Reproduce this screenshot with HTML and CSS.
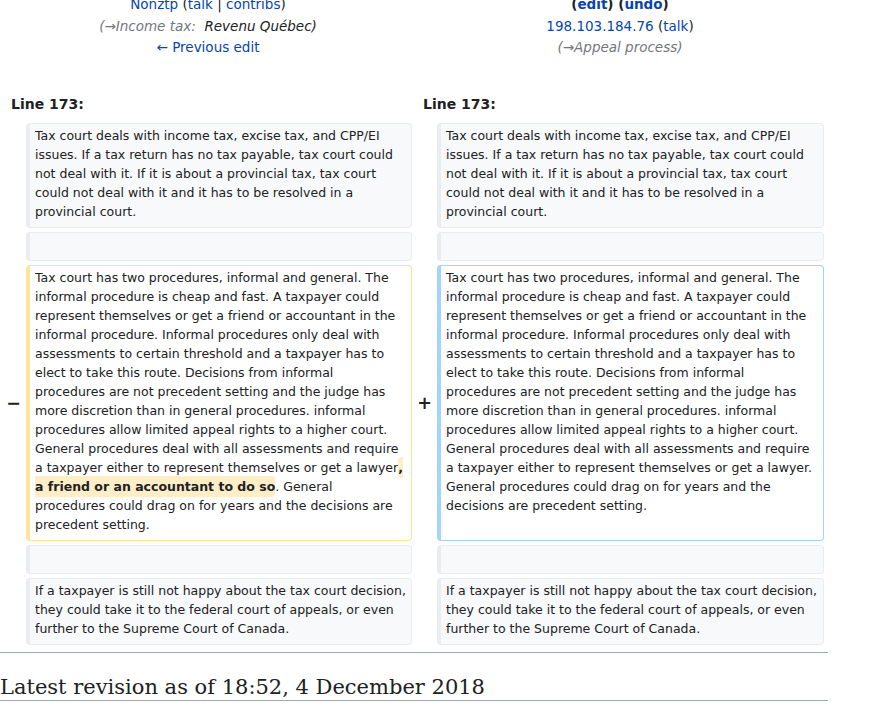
FILE: index.html
```html
<!DOCTYPE html>
<html>
<head>
<meta charset="utf-8">
<link rel="stylesheet" href="styles.css">
</head>
<body>
<div class="page">
<table class="diff">
<colgroup><col class="c-marker-l"><col class="c-content-l"><col class="c-marker-r"><col class="c-content-r"></colgroup>
<tr class="diff-title">
<td colspan="2" class="diff-otitle">
<div><a>Nonztp</a> <span class="paren">(<a>talk</a> | <a>contribs</a>)</span></div>
<div class="comment"><span class="gray">(<a class="gray">→Income tax:</a>&nbsp; </span>Revenu Québec<span class="dark">)</span></div>
<div><a>← Previous edit</a></div>
</td>
<td colspan="2" class="diff-ntitle">
<div class="bold"><span class="paren">(</span><a>edit</a><span class="paren">)</span> <span class="paren">(</span><a>undo</a><span class="paren">)</span></div>
<div><a>198.103.184.76</a> <span class="paren">(<a>talk</a>)</span></div>
<div class="comment gray">(→Appeal process)</div>
</td>
</tr>
<tr><td colspan="2" class="diff-lineno">Line 173:</td><td colspan="2" class="diff-lineno">Line 173:</td></tr>
<tr>
<td class="diff-marker"></td>
<td class="diff-context"><div>Tax court deals with income tax, excise tax, and CPP/EI issues. If a tax return has no tax payable, tax court could not deal with it. If it is about a provincial tax, tax court could not deal with it and it has to be resolved in a provincial court.</div></td>
<td class="diff-marker"></td>
<td class="diff-context"><div>Tax court deals with income tax, excise tax, and CPP/EI issues. If a tax return has no tax payable, tax court could not deal with it. If it is about a provincial tax, tax court could not deal with it and it has to be resolved in a provincial court.</div></td>
</tr>
<tr>
<td class="diff-marker"></td>
<td class="diff-context"><br></td>
<td class="diff-marker"></td>
<td class="diff-context"><br></td>
</tr>
<tr>
<td class="diff-marker">−</td>
<td class="diff-deletedline"><div>Tax court has two procedures, informal and general. The informal procedure is cheap and fast. A taxpayer could represent themselves or get a friend or accountant in the informal procedure. Informal procedures only deal with assessments to certain threshold and a taxpayer has to elect to take this route. Decisions from informal procedures are not precedent setting and the judge has more discretion than in general procedures. informal procedures allow limited appeal rights to a higher court. General procedures deal with all assessments and require a taxpayer either to represent themselves or get a lawyer<del class="diffchange">, a friend or an accountant to do so</del>. General procedures could drag on for years and the decisions are precedent setting.</div></td>
<td class="diff-marker">+</td>
<td class="diff-addedline"><div>Tax court has two procedures, informal and general. The informal procedure is cheap and fast. A taxpayer could represent themselves or get a friend or accountant in the informal procedure. Informal procedures only deal with assessments to certain threshold and a taxpayer has to elect to take this route. Decisions from informal procedures are not precedent setting and the judge has more discretion than in general procedures. informal procedures allow limited appeal rights to a higher court. General procedures deal with all assessments and require a taxpayer either to represent themselves or get a lawyer. General procedures could drag on for years and the decisions are precedent setting.</div></td>
</tr>
<tr>
<td class="diff-marker"></td>
<td class="diff-context"><br></td>
<td class="diff-marker"></td>
<td class="diff-context"><br></td>
</tr>
<tr>
<td class="diff-marker"></td>
<td class="diff-context"><div>If a taxpayer is still not happy about the tax court decision, they could take it to the federal court of appeals, or even further to the Supreme Court of Canada.</div></td>
<td class="diff-marker"></td>
<td class="diff-context"><div>If a taxpayer is still not happy about the tax court decision, they could take it to the federal court of appeals, or even further to the Supreme Court of Canada.</div></td>
</tr>
</table>
<hr class="diff-hr">
<h2 class="diff-currentversion-title">Latest revision as of 18:52, 4 December 2018</h2>
</div>
</body>
</html>
```
FILE: styles.css
```css
html, body {
  margin: 0;
  padding: 0;
  background: #ffffff;
}
body {
  font-family: "DejaVu Sans", sans-serif;
  color: #202122;
  overflow: hidden;
}
.page {
  width: 828px;
  margin-top: -10px;
}
a {
  color: #0645ad;
  text-decoration: none;
}
.diff {
  width: 828px;
  table-layout: fixed;
  border-collapse: separate;
  border-spacing: 4px;
  margin: -4px 0 0 0;
  font-size: 14px;
}
.c-marker-l { width: 18px; }
.c-content-l { width: 386px; }
.c-marker-r { width: 17px; }
.c-content-r { width: 387px; }
.diff-otitle, .diff-ntitle {
  text-align: center;
  vertical-align: top;
  line-height: 21.5px;
  padding: 0;
  font-size: 13.5px;
}
.paren { color: #202122; }
.bold { font-weight: bold; }
.comment { font-style: italic; color: #202122; }
.gray { color: #72777d; }
.dark { color: #202122; }
.diff-lineno {
  font-weight: bold;
  font-size: 14px;
  padding: 33px 7px 7px;
}
.diff-marker {
  text-align: right;
  font-weight: bold;
  font-size: 17.5px;
  line-height: 1.2;
  padding: 2px 1px 0 0;
  vertical-align: middle;
}
.diff-context, .diff-deletedline, .diff-addedline {
  font-size: 12.5px;
  line-height: 19px;
  vertical-align: top;
  border-style: solid;
  border-width: 1px 1px 1px 4px;
  border-radius: 4px;
  padding: 2px 5px 6px 5px;
  word-wrap: break-word;
}
.diff-context {
  background: #f8f9fa;
  border-color: #eaecf0;
  color: #202122;
}
.diff-deletedline {
  border-color: #ffe49c;
}
.diff-addedline {
  border-color: #a3d3ff;
}
.diffchange {
  font-weight: bold;
  text-decoration: none;
  background: #feeec8;
  border-radius: 4px;
  padding: 3px 0;
}
.diff-hr {
  border: 0;
  height: 1px;
  background: #a2a9b1;
  margin: 3px 0 0 0;
}
.diff-currentversion-title {
  font-family: "DejaVu Serif", serif;
  font-weight: normal;
  font-size: 21px;
  line-height: 25px;
  margin: 22px 0 0 0;
  padding: 0;
  border-bottom: 1px solid #a2a9b1;
}
```
